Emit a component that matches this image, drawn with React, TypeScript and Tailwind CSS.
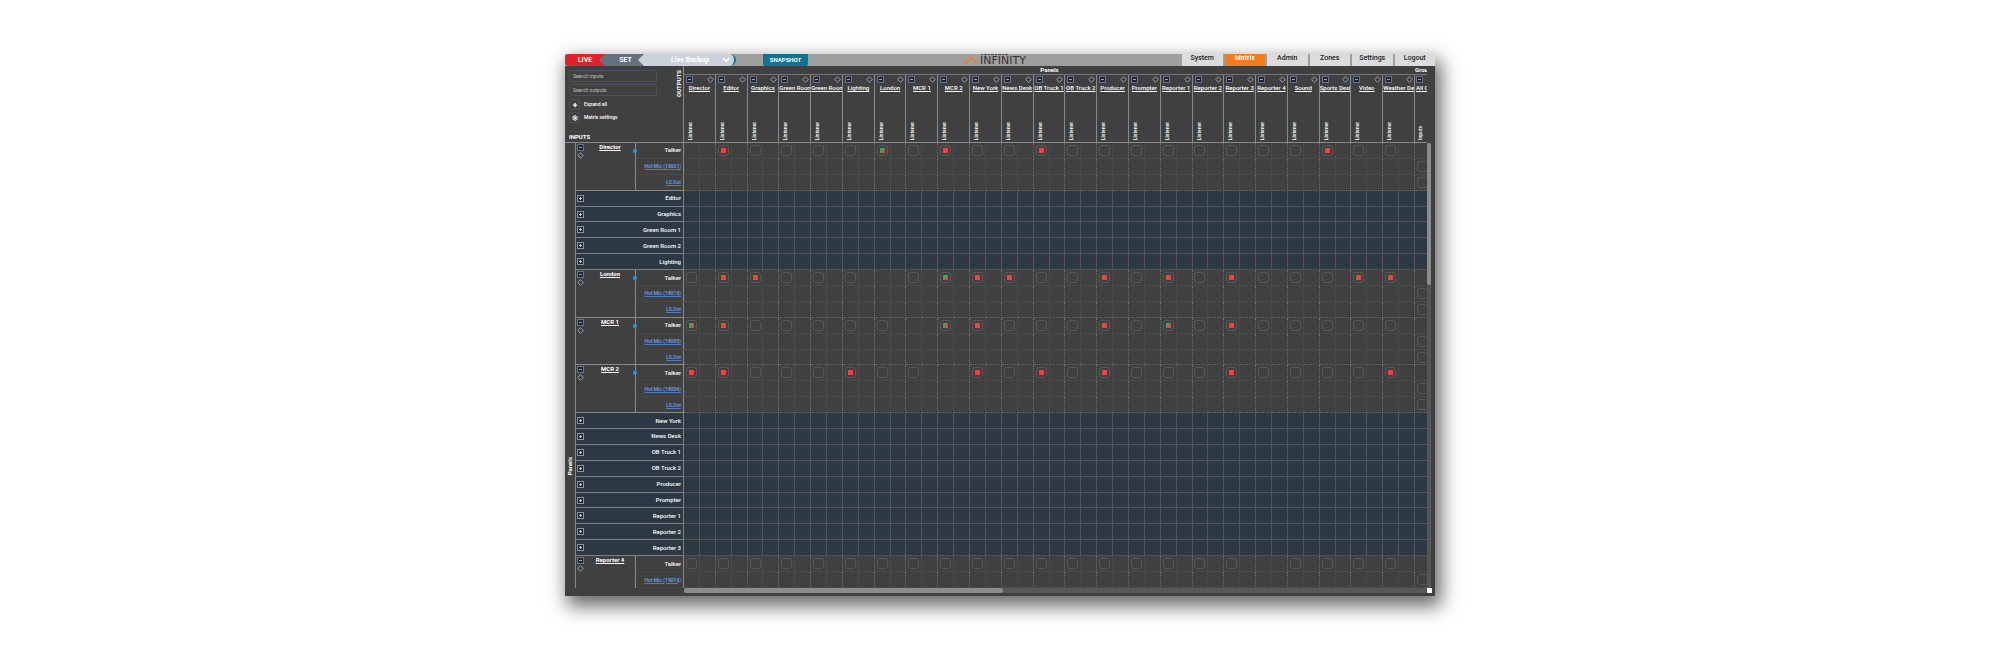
import { ChevronDown, Plus, Settings } from 'lucide-react'

type Mark = 'off' | 'on' | 'dual'

interface InputPanel {
  name: string
  hotMic?: string
  own?: number
  on?: number[]
  dual?: number[]
  rows?: number
}

const OUTPUTS = [
  'Director', 'Editor', 'Graphics', 'Green Room 1', 'Green Room 2', 'Lighting', 'London', 'MCR 1',
  'MCR 2', 'New York', 'News Desk', 'OB Truck 1', 'OB Truck 2', 'Producer', 'Prompter', 'Reporter 1',
  'Reporter 2', 'Reporter 3', 'Reporter 4', 'Sound', 'Sports Desk', 'Video', 'Weather Desk',
]

const INPUTS: InputPanel[] = [
  { name: 'Director', hotMic: '18001', own: 0, on: [1, 8, 11, 20], dual: [6] },
  { name: 'Editor' },
  { name: 'Graphics' },
  { name: 'Green Room 1' },
  { name: 'Green Room 2' },
  { name: 'Lighting' },
  { name: 'London', hotMic: '18019', own: 6, on: [1, 2, 9, 10, 13, 15, 17, 21, 22], dual: [8] },
  { name: 'MCR 1', hotMic: '18005', own: 7, on: [1, 9, 13, 17], dual: [0, 8, 15] },
  { name: 'MCR 2', hotMic: '18006', own: 8, on: [0, 1, 5, 9, 11, 13, 17, 22] },
  { name: 'New York' },
  { name: 'News Desk' },
  { name: 'OB Truck 1' },
  { name: 'OB Truck 2' },
  { name: 'Producer' },
  { name: 'Prompter' },
  { name: 'Reporter 1' },
  { name: 'Reporter 2' },
  { name: 'Reporter 3' },
  { name: 'Reporter 4', hotMic: '18016', own: 18, rows: 2 },
]

const TOTAL_ROWS = INPUTS.reduce((n, p) => n + (p.hotMic ? p.rows ?? 3 : 1), 0)

const TABS = ['System', 'Matrix', 'Admin', 'Zones', 'Settings', 'Logout']

export default function App() {
  return (
    <div className="h-screen bg-white py-[54px] font-[Roboto,sans-serif] text-white">
      <div className="mx-auto flex h-full w-[43.5%] flex-col bg-[#404040] shadow-[4px_8px_18px_2px_rgba(0,0,0,0.6)]">
        <TopBar />
        <div className="flex min-h-0 flex-1">
          <div className="flex min-w-0 flex-1 flex-col">
            <Matrix />
            <div className="ml-[119px] h-[5px] shrink-0 bg-[#585858]">
              <div className="h-full w-[43%] rounded-full bg-[#8c8c8c]" />
            </div>
            <div className="h-[3px] shrink-0" />
          </div>
          <div className="flex w-[8px] shrink-0 flex-col pt-[77px] pr-[4px] pb-[3px]">
            <div className="flex-1 bg-[#555]">
              <div className="h-[32%] w-[4px] rounded-full bg-[#8c8c8c]" />
            </div>
            <div className="size-[5px] bg-white" />
          </div>
        </div>
      </div>
    </div>
  )
}

function TopBar() {
  return (
    <header className="flex h-[12px] shrink-0 justify-between bg-[#9f9f9f] leading-none">
      <div className="flex">
        <button className="w-[40px] rounded-l-[4px] bg-[#dd2328] text-[7px] font-bold">LIVE</button>
        <button className="-ml-[6px] w-[45px] bg-[#66707e] pl-[8px] text-[7px] font-bold [clip-path:polygon(6px_0,100%_0,100%_100%,6px_100%,0_50%)]">
          SET
        </button>
        <button className="-ml-[6px] flex w-[98px] items-center rounded-r-[6px] border-r-2 border-[#0f7391] bg-[#ccd2dc] pr-[3px] pl-[33px] text-[7px] font-bold [clip-path:polygon(6px_0,100%_0,100%_100%,6px_100%,0_50%)]">
          <span className="flex-1 text-left whitespace-nowrap">Live Backup</span>
          <ChevronDown size={10} strokeWidth={4} className="shrink-0" />
        </button>
        <button className="ml-[27px] w-[45px] rounded-b-[2px] bg-[#0f7391] text-[6px] font-bold">SNAPSHOT</button>
      </div>
      <div className="flex">
        <Logo />
        <nav className="flex w-[253px] gap-[2px]">
          {TABS.map(tab => (
            <a
              key={tab}
              href={`#${tab.toLowerCase()}`}
              className={`flex-1 pt-px text-center text-[7px] font-medium ${
                tab === 'Matrix' ? 'bg-[#f47b20] text-white' : 'bg-[#dcdcdc] text-[#222]'
              }`}
            >
              {tab}
            </a>
          ))}
        </nav>
      </div>
    </header>
  )
}

function Logo() {
  return (
    <svg className="mr-[151px] h-[12px] w-[68px]" viewBox="0 0 68 12" fill="none" aria-label="Infinity">
      <path d="M1 9C5.500 9.500 5 4 8 4S11 9.500 15 9" stroke="#f07d1a" strokeWidth="1.400" />
      <path d="M1 9C-.5 5.500 4 5 6.500 7" stroke="#f07d1a" strokeWidth=".8" />
      <path d="M18 .5h28" stroke="#444" strokeDasharray="2 1 3 1" />
      <text x="17" y="10" fontSize="11" fill="#333" fontFamily="DejaVu Sans">INFINITY</text>
    </svg>
  )
}

function Matrix() {
  return (
    <table className="h-full w-full table-fixed border-separate border-spacing-0 text-[6px] leading-none">
      <colgroup>
        <col className="w-[11px]" />
        <col className="w-[60px]" />
        <col className="w-[48px]" />
        {OUTPUTS.map(name => (
          <col key={name} span={2} />
        ))}
        <col className="w-[12px]" />
      </colgroup>
      <thead>
        <tr className="h-[9px]">
          <th colSpan={3} rowSpan={2} className="border-r border-b border-[#8a8a8a] p-0 align-top font-normal">
            <Corner />
          </th>
          <th colSpan={46} className="border-b border-[#777] p-0 font-bold">
            Panels
          </th>
          <th className="border-b border-[#777] p-0">
            <div className="overflow-hidden text-left">Grou</div>
          </th>
        </tr>
        <tr className="h-[68px]">
          {OUTPUTS.map(name => (
            <th key={name} colSpan={2} className="border-r border-b border-[#8a8a8a] p-0 align-top">
              <div className="flex h-[67px] flex-col pt-px">
                <div className="flex items-center justify-between pr-px pl-[2px]">
                  <Toggle open name={name} />
                  <Diamond />
                </div>
                <a href={`#${name}`} className="block overflow-hidden text-center leading-[10px] font-medium whitespace-nowrap underline">
                  {name}
                </a>
                <div className="flex flex-1 items-end pb-[2px] pl-[4px]">
                  <span className="rotate-180 text-[5px] font-medium [writing-mode:vertical-rl]">Listener</span>
                </div>
              </div>
            </th>
          ))}
          <th className="border-b border-[#8a8a8a] p-0 align-top">
            <div className="flex h-[67px] flex-col overflow-hidden pt-px pl-px">
              <Toggle open name="All Call" />
              <a href="#all" className="leading-[10px] font-medium whitespace-nowrap underline">All C</a>
              <div className="flex flex-1 items-end pb-[2px] pl-[2px]">
                <span className="rotate-180 text-[5px] font-medium [writing-mode:vertical-rl]">Inputs</span>
              </div>
            </div>
          </th>
        </tr>
      </thead>
      <tbody>
        {INPUTS.map((panel, i) =>
          panel.hotMic ? <OpenPanel key={panel.name} panel={panel} first={i === 0} /> : <ClosedPanel key={panel.name} name={panel.name} />
        )}
      </tbody>
    </table>
  )
}

function Corner() {
  return (
    <div className="flex h-[76px] justify-between text-left">
      <div className="flex flex-col pt-[4px] pl-[4px] text-[5px]">
        <input
          aria-label="Search inputs"
          placeholder="Search inputs"
          className="h-[12px] w-[88px] rounded-[2px] border border-[#4b5160] px-[3px] placeholder:text-[#c0c0c0]"
        />
        <input
          aria-label="Search outputs"
          placeholder="Search outputs"
          className="mt-[2px] h-[12px] w-[88px] rounded-[2px] border border-[#4b5160] px-[3px] placeholder:text-[#c0c0c0]"
        />
        <button className="mt-[3px] flex items-center gap-[4px] font-medium">
          <span className="flex size-[11px] items-center justify-center rounded-[2px] border border-[#4b5160]">
            <Plus size={6} strokeWidth={5} />
          </span>
          Expand all
        </button>
        <button className="mt-[2px] flex items-center gap-[4px] font-medium">
          <span className="flex size-[11px] items-center justify-center rounded-[2px] border border-[#4b5160]">
            <Settings size={6} strokeWidth={4} />
          </span>
          Matrix settings
        </button>
        <b className="mt-auto pb-[2px] text-[6px]">INPUTS</b>
      </div>
      <b className="rotate-180 self-start pb-[4px] pl-px [writing-mode:vertical-rl]">OUTPUTS</b>
    </div>
  )
}

function Rail() {
  return (
    <th rowSpan={TOTAL_ROWS} className="border-r border-[#8a8a8a] p-0 pb-28 align-bottom">
      <span className="inline-block rotate-180 [writing-mode:vertical-rl]">Panels</span>
    </th>
  )
}

function OpenPanel({ panel, first }: { panel: InputPanel; first: boolean }) {
  const lines = ['Talker', `Hot Mic (${panel.hotMic})`, 'LS.Out'].slice(0, panel.rows ?? 3)
  const clipped = lines.length < 3

  return (
    <>
      {lines.map((line, row) => {
        const last = row === lines.length - 1 && !clipped
        return (
          <tr key={line}>
            {first && row === 0 && <Rail />}
            {row === 0 && (
              <th
                rowSpan={lines.length}
                className={`border-r border-[#8a8a8a] p-0 align-top ${clipped ? '' : 'border-b'}`}
              >
                <div className="relative flex items-start gap-px pt-px pl-px">
                  <span className="flex flex-col items-center gap-px">
                    <Toggle open name={panel.name} />
                    <Diamond />
                  </span>
                  <a href={`#${panel.name}`} className="flex-1 text-center underline">{panel.name}</a>
                  {!clipped && <span className="absolute top-[6px] -right-[2px] size-[4px] rounded-full bg-[#1e9bf0]" />}
                </div>
              </th>
            )}
            <th
              className={`border-r border-b border-r-[#8a8a8a] p-0 pr-[2px] text-right font-medium whitespace-nowrap ${
                last ? 'border-b-[#8a8a8a]' : 'border-b-[#494949]'
              }`}
            >
              {row === 0 ? (
                line
              ) : (
                <a href={`#${line}`} className="text-[5px] text-[#68a6f2] underline decoration-[#4a7fc4] underline-offset-1">
                  {line}
                </a>
              )}
            </th>
            {OUTPUTS.map((out, i) => (
              <Pair key={out} last={last}>
                {row === 0 && i !== panel.own && (
                  <Crosspoint
                    label={`${panel.name} to ${out}`}
                    mark={panel.on?.includes(i) ? 'on' : panel.dual?.includes(i) ? 'dual' : 'off'}
                  />
                )}
              </Pair>
            ))}
            <td className={`border-b p-0 ${last ? 'border-dotted border-[#6a6a6a]' : 'border-[#4a4a4a]'}`}>
              <div className="flex h-[14px] items-center overflow-hidden pl-[2px]">
                {row > 0 && <Crosspoint label={`${line} to All Call`} mark="off" />}
              </div>
            </td>
          </tr>
        )
      })}
    </>
  )
}

function Pair({ children, last }: { children: React.ReactNode; last: boolean }) {
  const bottom = last ? 'border-b-[#6a6a6a] [border-bottom-style:dotted]' : 'border-b-[#4a4a4a]'
  return (
    <>
      <td className={`border-r border-b border-r-[#4a4a4a] p-0 ${bottom}`}>
        <div className="flex h-[14px] items-center justify-center">{children}</div>
      </td>
      <td className={`border-r border-b border-r-[#707070] p-0 [border-right-style:dotted] ${bottom}`} />
    </>
  )
}

function ClosedPanel({ name }: { name: string }) {
  return (
    <tr className="bg-[#2c3843]">
      <th colSpan={2} className="border-r border-b border-[#7d8185] p-0 pr-[2px] pl-px font-medium">
        <div className="flex h-[14px] items-center justify-between">
          <Toggle name={name} />
          {name}
        </div>
      </th>
      {Array.from({ length: 46 }, (_, i) => (
        <td key={i} className="border-r border-b border-[#545454] p-0" />
      ))}
      <td className="border-b border-[#545454] p-0" />
    </tr>
  )
}

function Crosspoint({ label, mark }: { label: string; mark: Mark }) {
  const fill: Record<Mark, string> = {
    off: '',
    on: 'bg-[linear-gradient(#f2423f,#f2423f)]',
    dual: 'bg-[linear-gradient(135deg,#1fb558_50%,#f2423f_50%)]',
  }
  return (
    <input
      type="checkbox"
      aria-label={label}
      defaultChecked={mark !== 'off'}
      className={`size-[11px] shrink-0 appearance-none rounded-[3px] border border-[#585858] bg-[length:5px_5px] bg-center bg-no-repeat ${fill[mark]}`}
    />
  )
}

function Toggle({ name, open }: { name: string; open?: boolean }) {
  return (
    <button aria-label={`${open ? 'Collapse' : 'Expand'} ${name}`} className="block size-[7px] shrink-0">
      <svg viewBox="0 0 7 7" fill="none" className="size-full">
        <rect x=".5" y=".5" width="6" height="6" fill="#1e2835" stroke={open ? '#66738a' : '#8b9299'} />
        <path d={open ? 'M2 3.500h3' : 'M2 3.500h3M3.500 2v3'} stroke={open ? '#9aa5b4' : '#c3cad3'} />
      </svg>
    </button>
  )
}

function Diamond() {
  return (
    <svg viewBox="0 0 7 7" fill="none" className="size-[7px] shrink-0">
      <path d="M3.500 .7 6.300 3.500 3.500 6.300 .7 3.500Z" stroke="#94a1b3" />
    </svg>
  )
}
